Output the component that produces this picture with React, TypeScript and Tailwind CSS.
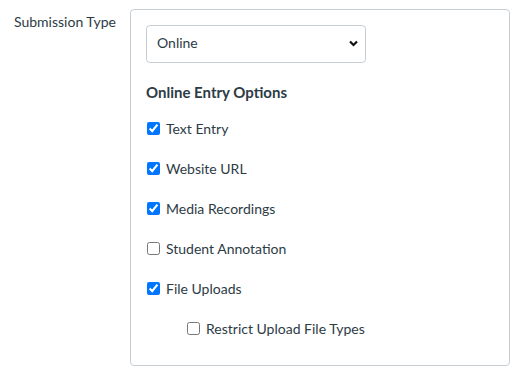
import { useState } from 'react'

interface EntryOption { id: string; label: string; checked: boolean; indent?: boolean }

const initialOptions: EntryOption[] = [
  { id: 'text', label: 'Text Entry', checked: true },
  { id: 'url', label: 'Website URL', checked: true },
  { id: 'media', label: 'Media Recordings', checked: true },
  { id: 'annotation', label: 'Student Annotation', checked: false },
  { id: 'upload', label: 'File Uploads', checked: true },
  { id: 'restrict', label: 'Restrict Upload File Types', checked: false, indent: true },
]

function CheckRow({ opt, onToggle }: { opt: EntryOption; onToggle: () => void }) {
  return (
    <label className={`flex items-center h-5 gap-[6px] ${opt.indent ? 'pl-[41px]' : 'pl-px'}`}>
      <input
        type="checkbox"
        checked={opt.checked}
        onChange={onToggle}
        className="m-0 w-[13px] h-[13px] accent-[#0075ff]"
      />
      <span className="text-[14px] text-[#2d3b45]">{opt.label}</span>
    </label>
  )
}

export default function App() {
  const [options, setOptions] = useState(initialOptions)
  const [type, setType] = useState('online')

  function toggle(id: string) {
    setOptions(prev => prev.map(o => (o.id === id ? { ...o, checked: !o.checked } : o)))
  }

  return (
    <div className="w-[518px] h-[371px] bg-white flex items-start pt-[9px] pl-[14px] font-['Lato','Noto_Sans',sans-serif]">
      {/* Label column */}
      <div className="w-[116px] pt-[3px] text-[14px] leading-5 text-[#2d3b45]">Submission Type</div>

      {/* Options panel */}
      <div className="w-[380px] h-[357px] border border-[#c7cdd1] rounded-[4px] pt-[15px] pl-[15px]">
        <div className="relative w-[220px] h-[38px]">
          <select
            value={type}
            onChange={e => setType(e.target.value)}
            className="appearance-none w-full h-full border border-[#c7cdd1] rounded-[4px] pl-[10px] pb-[3px] text-[14px] text-[#2d3b45] bg-white"
          >
            <option value="online">Online</option>
            <option value="paper">On Paper</option>
            <option value="none">No Submission</option>
          </select>
          <svg className="absolute right-[8px] top-[15px] pointer-events-none" width="9" height="7" viewBox="0 0 9 7">
            <path d="M1 1.5 L4.5 5 L8 1.5" fill="none" stroke="#111" strokeWidth="2.2" />
          </svg>
        </div>

        <h3 className="mt-[19px] text-[15px] leading-5 font-bold text-[#2d3b45]">Online Entry Options</h3>

        <div className="mt-4 flex flex-col gap-5">
          {options.map(opt => (
            <CheckRow key={opt.id} opt={opt} onToggle={() => toggle(opt.id)} />
          ))}
        </div>
      </div>
    </div>
  )
}
